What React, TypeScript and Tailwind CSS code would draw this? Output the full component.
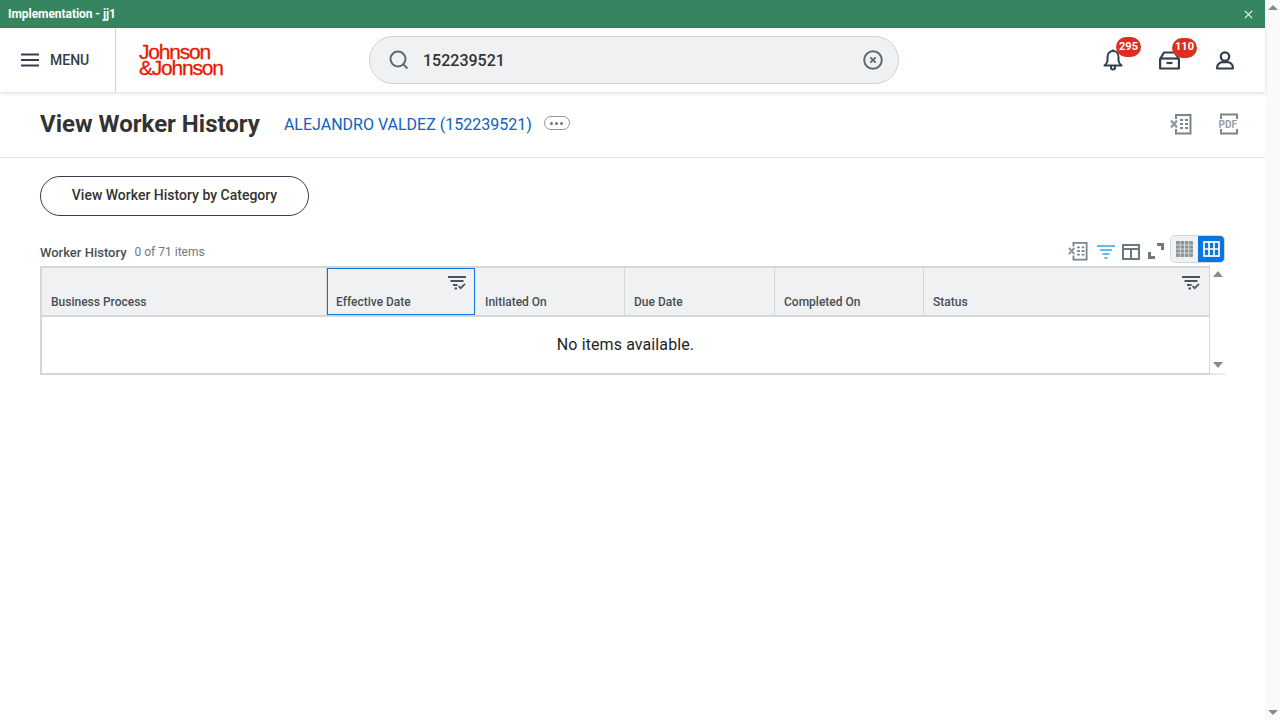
const columns = [
  { label: 'Business Process', cell: 'w-[285px] border-r border-[#d5d8db] pb-[5px] pl-[9px]' },
  { label: 'Effective Date', cell: 'w-[148px] border border-[#0875e1] pb-[4px] pl-[8px]', filter: 'right-[8px] top-[7px]' },
  { label: 'Initiated On', cell: 'w-[150px] border-r border-[#d5d8db] pb-[5px] pl-[10px]' },
  { label: 'Due Date', cell: 'w-[150px] border-r border-[#d5d8db] pb-[5px] pl-[9px]' },
  { label: 'Completed On', cell: 'w-[149px] border-r border-[#d5d8db] pb-[5px] pl-[9px]' },
  { label: 'Status', cell: 'w-[285px] pb-[5px] pl-[9px]', filter: 'right-[9px] top-[8px]' },
];

function FilterCheckIcon() {
  return (
    <svg width="18" height="14" viewBox="0 0 18 14" fill="none" className="text-[#4a5561]">
      <path d="M0 1h18" stroke="currentColor" strokeWidth="2" />
      <path d="M2.500 5h13" stroke="currentColor" strokeWidth="2" />
      <path d="M5 9h4.500M6.500 12.500h2.500" stroke="currentColor" strokeWidth="2" />
      <path d="M10.500 10l2.200 2.200 4.300-4.300" stroke="currentColor" strokeWidth="1.700" />
    </svg>
  );
}

function ExcelIcon({ size = 22 }: { size?: number }) {
  return (
    <svg width={size} height={size} viewBox="0 0 22 22" fill="none">
      <path d="M6 6V2h14.500v18.500H6V16" stroke="#7b858f" strokeWidth="2" />
      <path d="M1 7.500l6 7M7 7.500l-6 7" stroke="#8c949c" strokeWidth="2.200" />
      <path d="M10 7h3M15 7h3M10 11h3M15 11h3M10 15h3M15 15h3" stroke="#7b858f" strokeWidth="2" />
    </svg>
  );
}

function PdfIcon() {
  return (
    <svg width="20" height="22" viewBox="0 0 20 22" fill="none">
      <path d="M2 6V1.500h16V6M2 16v4.500h16V16" stroke="#7b858f" strokeWidth="2" />
      <text x="-0.500" y="14.500" fontSize="10" fontWeight="700" fill="#98a0a8" fontFamily="Roboto, sans-serif">PDF</text>
    </svg>
  );
}

function BellIcon() {
  return (
    <svg width="20" height="22" viewBox="0 0 20 22" fill="none" stroke="#333f4d" strokeWidth="2" strokeLinejoin="round">
      <path d="M10 2c-3.600 0-5.500 2.800-5.500 6v3.500c0 2-1.200 3.400-3 5h17c-1.800-1.600-3-3-3-5V8c0-3.200-1.900-6-5.500-6z" />
      <path d="M8 17v1.500a2 2 0 0 0 4 0V17" />
      <path d="M10 0.500v2" />
    </svg>
  );
}

function InboxIcon() {
  return (
    <svg width="21" height="19" viewBox="0 0 21 19" fill="none" stroke="#333f4d" strokeWidth="2.200">
      <path d="M5 1.500h11l3.900 6.500v9.500H1.100V8z" strokeLinejoin="round" />
      <path d="M1 7.500h19" />
      <path d="M7.500 12h6" />
    </svg>
  );
}

function UserIcon() {
  return (
    <svg width="18" height="19" viewBox="0 0 18 19" fill="none" stroke="#333f4d" strokeWidth="2.200">
      <circle cx="9" cy="5.500" r="4.200" />
      <path d="M1.100 17.500v-1c0-3 2.500-5.300 5.500-5.300h4.800c3 0 5.500 2.300 5.500 5.300v1z" strokeLinejoin="round" />
    </svg>
  );
}

export default function App() {
  return (
    <div className="flex h-[720px] w-[1280px] overflow-hidden bg-white font-['Roboto',sans-serif] text-[#333333]">
      <div className="flex w-[1265px] flex-col">
        {/* Environment bar */}
        <div className="flex h-[28px] shrink-0 items-center justify-between bg-[#348560] pl-2 pr-[12px] text-white">
          <span className="text-xs font-bold tracking-[-0.050px]">Implementation - jj1</span>
          <svg width="9" height="9" viewBox="0 0 10 10" stroke="currentColor" strokeWidth="1.200">
            <path d="M1 1l8 8M9 1l-8 8" />
          </svg>
        </div>

        {/* Top nav */}
        <header className="relative z-10 flex h-[64px] shrink-0 items-center bg-white shadow-[0_1px_4px_rgba(0,0,0,0.16)]">
          <div className="flex h-full w-[116px] items-center border-r border-[#d0d3d6] pl-[21px]">
            <svg width="18" height="14" viewBox="0 0 18 14" stroke="#333f4d" strokeWidth="2">
              <path d="M0 1.500h18M0 7h18M0 12.500h18" />
            </svg>
            <span className="ml-[11px] text-sm font-medium text-[#333f4d]">MENU</span>
          </div>
          <div className="ml-[23px] w-[230px] text-[21px] leading-[16px] tracking-[-1.200px] text-[#eb1700] [-webkit-text-stroke:0.300px_#eb1700] font-['Liberation_Sans',sans-serif]">
            Johnson
            <br />
            &amp;Johnson
          </div>
          <div className="flex h-[48px] w-[530px] items-center rounded-full border border-[#ced3d9] bg-[#f0f1f2] pl-[19px] pr-[15px]">
            <svg width="20" height="20" viewBox="0 0 20 20" fill="none" stroke="#5e6a75" strokeWidth="2">
              <circle cx="9" cy="9" r="7.500" />
              <path d="M14.500 14.500l4 4" />
            </svg>
            <span className="ml-[14px] mt-[2px] flex-1 text-base font-medium text-[#333333]">152239521</span>
            <svg width="20" height="20" viewBox="0 0 20 20" fill="none" stroke="#5e6a75">
              <circle cx="10" cy="10" r="8.800" strokeWidth="2" />
              <path d="M7.300 7.300l5.400 5.400M12.700 7.300l-5.400 5.400" strokeWidth="1.900" />
            </svg>
          </div>
          <div className="relative ml-[204px] flex items-center">
            <BellIcon />
            <span className="absolute left-[13px] top-[-12px] flex h-[20px] w-[25px] items-center justify-center rounded-full bg-[#de2e21] text-[11px] font-bold text-white">295</span>
          </div>
          <div className="relative ml-[36px] flex items-center">
            <InboxIcon />
            <span className="absolute left-[13px] top-[-13px] flex h-[20px] w-[25px] items-center justify-center rounded-full bg-[#de2e21] text-[11px] font-bold text-white">110</span>
          </div>
          <div className="ml-[36px]">
            <UserIcon />
          </div>
        </header>

        {/* Page title */}
        <div className="flex h-[66px] shrink-0 items-center border-b border-[#dfe2e6] pl-[40px] pr-[26px]">
          <h1 className="mb-[2px] text-2xl font-bold text-[#333333]">View Worker History</h1>
          <a className="ml-[24px] text-base text-[#0b63c1]">ALEJANDRO VALDEZ (152239521)</a>
          <div className="ml-[12px] mb-[3px] flex h-[14px] w-[26px] items-center justify-center gap-[2px] rounded-full border border-[#8e969e]">
            <span className="h-[3px] w-[3px] rounded-full bg-[#6d7780]" />
            <span className="h-[3px] w-[3px] rounded-full bg-[#6d7780]" />
            <span className="h-[3px] w-[3px] rounded-full bg-[#6d7780]" />
          </div>
          <div className="ml-auto mb-[2px] flex items-center gap-[27px]">
            <ExcelIcon />
            <PdfIcon />
          </div>
        </div>

        {/* Content */}
        <div className="flex flex-col pl-[40px] pr-[40px] pt-[18px]">
          <button className="flex h-[40px] w-[269px] items-center justify-center rounded-full border border-[#333f4d] pb-[2px] text-sm font-medium text-[#333333]">
            View Worker History by Category
          </button>

          <div className="mt-[19px] flex h-[31px] items-end justify-between">
            <div className="flex items-center pb-[4px]">
              <span className="text-[13px] font-medium text-[#4a4f55]">Worker History</span>
              <span className="ml-2 text-xs text-[#6d7780]">0 of 71 items</span>
            </div>
            <div className="flex items-center pb-[3px]">
              <div className="mt-[4px]">
                <ExcelIcon size={20} />
              </div>
              <svg width="18" height="14" viewBox="0 0 18 14" fill="none" stroke="#62bce6" strokeWidth="2" className="ml-[9px] mt-[6px]">
                <path d="M0 1h18M3 5h12M5.500 9h7M7.500 13h3" />
              </svg>
              <svg width="18" height="16" viewBox="0 0 18 16" fill="none" stroke="#6f7780" strokeWidth="2" className="ml-[7px] mt-[5px]">
                <path d="M1 1h16v14H1zM1 5h16M9 5v10" />
              </svg>
              <svg width="16" height="16" viewBox="0 0 16 16" fill="none" stroke="#6f7780" strokeWidth="3" className="ml-[8px] mt-[3px]">
                <path d="M9 1.500h5.500V7M1.500 9v5.500H7" />
              </svg>
              <div className="ml-[6px] flex h-[28px] w-[55px] overflow-hidden rounded-[5px] border border-[#d3d7db]">
                <div className="flex w-[27px] items-center justify-center bg-[#f0f1f2]">
                  <svg width="17" height="16" viewBox="0 0 17 16" fill="#8c949c" stroke="#e3e5e7" strokeWidth="0.800">
                    <rect x="0" y="0" width="17" height="16" rx="1" stroke="none" />
                    <path d="M0 4h17M0 8h17M0 12h17M4.250 0v16M8.500 0v16M12.750 0v16" fill="none" />
                  </svg>
                </div>
                <div className="flex flex-1 items-center justify-center bg-[#0875e1]">
                  <svg width="17" height="16" viewBox="0 0 17 16" fill="none" stroke="white" strokeWidth="1.700">
                    <rect x="1" y="1" width="15" height="14" />
                    <path d="M1 8h15M6 1v14M11 1v14" />
                  </svg>
                </div>
              </div>
            </div>
          </div>

          {/* Table */}
          <div className="flex h-[109px] w-[1185px]">
            <div className="flex w-[1170px] flex-col border-2 border-r border-[#d5d8db]">
              <div className="flex h-[49px] shrink-0 border-b-2 border-[#d5d8db] bg-[#f0f1f2]">
                {columns.map((col) => (
                  <div key={col.label} className={`relative flex items-end text-xs font-medium text-[#4a4f55] ${col.cell}`}>
                    {col.label}
                    {col.filter && (
                      <span className={`absolute ${col.filter}`}>
                        <FilterCheckIcon />
                      </span>
                    )}
                  </div>
                ))}
              </div>
              <div className="flex flex-1 items-center justify-center text-base tracking-[0.100px] text-[#1f1f1f]">No items available.</div>
            </div>
            <div className="flex w-[15px] flex-col items-center justify-between border-b-2 border-[#e8eaec] py-[5px]">
              <span className="h-0 w-0 border-x-[5px] border-b-[6px] border-x-transparent border-b-[#8a8a8a]" />
              <span className="h-0 w-0 border-x-[5px] border-t-[6px] border-x-transparent border-t-[#8a8a8a]" />
            </div>
          </div>
        </div>
      </div>

      {/* Page scrollbar */}
      <div className="flex w-[15px] flex-col items-center justify-between bg-[#fafafa] py-[5px]">
        <span className="h-0 w-0 border-x-[5px] border-b-[5px] border-x-transparent border-b-[#8a8a8a]" />
        <span className="h-0 w-0 border-x-[5px] border-t-[5px] border-x-transparent border-t-[#8a8a8a]" />
      </div>
    </div>
  );
}
